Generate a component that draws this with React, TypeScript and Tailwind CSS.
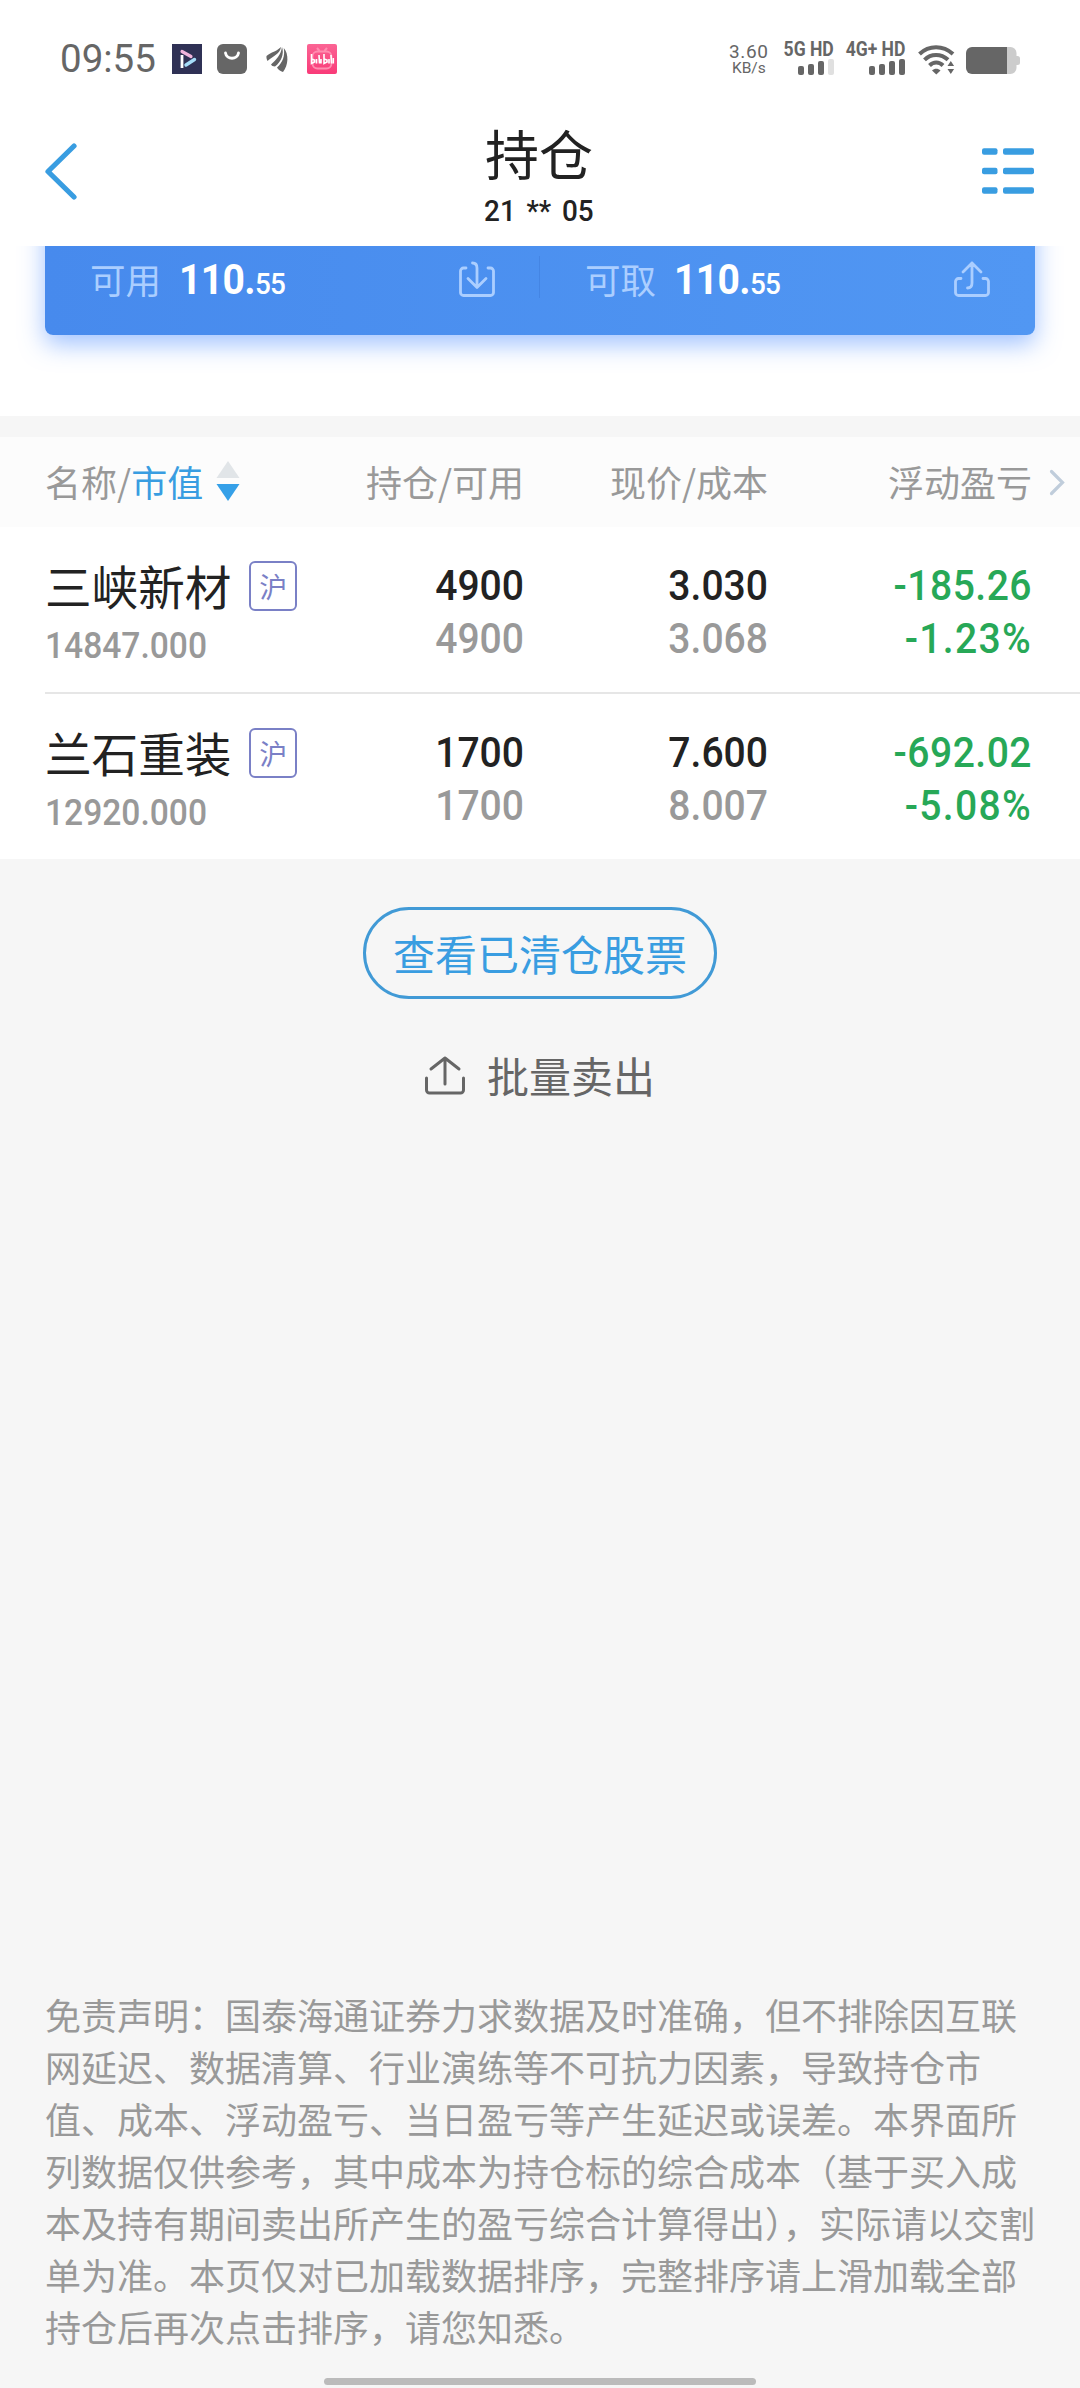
const cjk = "font-['Noto_Sans_CJK_SC',sans-serif]"
const din = "font-['Roboto','Liberation_Sans',sans-serif]"

const holdings = [
  {
    name: "三峡新材",
    market: "沪",
    value: "14847.000",
    amount: "4900",
    available: "4900",
    price: "3.030",
    cost: "3.068",
    profit: "-185.26",
    rate: "-1.23%",
  },
  {
    name: "兰石重装",
    market: "沪",
    value: "12920.000",
    amount: "1700",
    available: "1700",
    price: "7.600",
    cost: "8.007",
    profit: "-692.02",
    rate: "-5.08%",
  },
]

const disclaimer = [
  "免责声明：国泰海通证券力求数据及时准确，但不排除因互联",
  "网延迟、数据清算、行业演练等不可抗力因素，导致持仓市",
  "值、成本、浮动盈亏、当日盈亏等产生延迟或误差。本界面所",
  "列数据仅供参考，其中成本为持仓标的综合成本（基于买入成",
  "本及持有期间卖出所产生的盈亏综合计算得出），实际请以交割",
  "单为准。本页仅对已加载数据排序，完整排序请上滑加载全部",
  "持仓后再次点击排序，请您知悉。",
]

function Signal({ label, bars }: { label: string; bars: number }) {
  return (
    <div className="flex flex-col items-end">
      <span className="text-[19.5px] leading-[18px] font-bold whitespace-pre origin-right scale-x-[0.9]">{label}</span>
      <div className="flex items-end gap-[4px] h-[16px]">
        {[9, 11, 14, 16].map((h, i) => (
          <span
            key={h}
            className={`w-[6px] rounded-[2px] ${i < bars ? "bg-[#666]" : "bg-[#e0e0e0]"}`}
            style={{ height: h }}
          />
        ))}
      </div>
    </div>
  )
}

function StatusBar() {
  return (
    <div className={`h-[120px] flex items-start text-[#666] ${din}`}>
      <span className="ml-[60px] mt-[39px] w-[97px] text-[38.5px] leading-[40px]">09:55</span>

      <svg className="ml-[15px] mt-[44px]" width="30" height="30" viewBox="0 0 30 30">
        <rect width="30" height="30" fill="#2f3155" />
        <path d="M10 11v13" stroke="#fff" strokeWidth="2.8" />
        <path d="M10 7.500l9 5" stroke="#f0b4dc" strokeWidth="3.200" strokeLinecap="round" />
        <path d="M14 21l8.500-5.500" stroke="#a5dcf8" strokeWidth="3.400" strokeLinecap="round" />
      </svg>
      <svg className="ml-[15px] mt-[44px]" width="30" height="30" viewBox="0 0 30 30">
        <rect width="30" height="30" rx="6" fill="#666" />
        <path d="M8.500 9c1 7 12 7 13 0" stroke="#fff" strokeWidth="2.800" fill="none" strokeLinecap="round" />
      </svg>
      <svg className="ml-[19px] mt-[46px]" width="24" height="26" viewBox="0 0 24 26">
        <path d="M0.500 10C5 6 9 6.500 15 1C14 8 7 10 1.500 15C0.500 13 0.300 11 0.500 10z" fill="#666" />
        <path d="M5 18.500C10 14 15 9 16 1C18.500 8 15 16 9 20.500C7 20.500 5.500 19.500 5 18.500z" fill="#666" />
        <path d="M11 21.500C17 16 19 10 17.800 2C23 8 22.500 19 17 26C14.500 25.500 12 23.500 11 21.500z" fill="#666" />
      </svg>
      <svg className="ml-[17px] mt-[44px]" width="30" height="30" viewBox="0 0 30 30">
        <defs>
          <linearGradient id="pink" x1="0" y1="0" x2="0" y2="1">
            <stop offset="0" stopColor="#fb6494" />
            <stop offset="1" stopColor="#f93a78" />
          </linearGradient>
        </defs>
        <rect width="30" height="30" rx="2" fill="url(#pink)" />
        <rect x="5.500" y="7.500" width="19" height="17" rx="5" fill="none" stroke="#ff8db0" strokeWidth="1.800" />
        <path d="M10 4l2.500 3M20 4l-2.500 3" stroke="#ff8db0" strokeWidth="2" />
        <path
          d="M4.500 10v9.500l3-1.500v-2l-3-1M9.500 15v4.500M12 11l.5 8.500M14 15v4.500M17 10v9.500l3-1.500v-2l-3-1M22 15v4.500M24 11l.5 8.500M26.300 14v5.500"
          stroke="#fff"
          strokeWidth="1.600"
          fill="none"
        />
      </svg>

      <div className="ml-auto mt-[42px] mr-[9px] w-[40px] flex flex-col items-center">
        <span className="text-[19px] leading-[19px] tracking-[0.6px]">3.60</span>
        <span className="text-[15.500px] leading-[15px]">KB/s</span>
      </div>
      <div className="mt-[41px] mr-[5px]">
        <Signal label="5G HD" bars={3} />
      </div>
      <div className="mt-[41px] mr-[13px]">
        <Signal label="4G+ HD" bars={4} />
      </div>
      <svg className="mt-[44px] mr-[10px]" width="38" height="31" viewBox="0 0 38 31">
        <g fill="none" stroke="#666" strokeWidth="4">
          <path d="M1.500 10C11 1 25 1 35 10" />
          <path d="M6.500 15.800C13 9.300 23 9.300 30 15.800" />
          <path d="M11.500 21.500C15.500 17.500 21 17.500 25 21.500" />
        </g>
        <path d="M14 26.500C16.500 24 20 24 22.500 26.500L18.300 30.500z" fill="#666" />
        <path d="M29.500 22l3.300-5l3.300 5zM29.500 25h6.600l-3.300 5z" fill="#666" />
      </svg>
      <svg className="mt-[47px] mr-[60px]" width="54" height="27" viewBox="0 0 54 27">
        <path d="M40 0h4.500a6 6 0 0 1 6 6v3h1a2.500 2.500 0 0 1 2.500 2.500v4a2.500 2.500 0 0 1-2.500 2.500h-1v3a6 6 0 0 1-6 6H40z" fill="#ccc" />
        <path d="M6 0h35v27H6a6 6 0 0 1-6-6V6a6 6 0 0 1 6-6z" fill="#666" />
      </svg>
    </div>
  )
}

function NavBar() {
  return (
    <div className="h-[126px] flex items-start justify-between pl-[44px] pr-[46px]">
      <svg className="mt-[23px]" width="52" height="58" viewBox="0 0 52 58" fill="none">
        <path d="M30 3L4 28.500L30 54" stroke="#399de1" strokeWidth="5.200" strokeLinecap="round" strokeLinejoin="round" />
      </svg>
      <div className="flex flex-col items-center text-[#222]">
        <h1 className="text-[54px] leading-[64px] mt-px">持仓</h1>
        <span className={`mt-[8px] text-[30px] leading-[36px] font-medium scale-x-[0.93] [word-spacing:4px] ${din}`}>
          21 ** 05
        </span>
      </div>
      <svg className="mt-[28px]" width="52" height="47" viewBox="0 0 52 47" fill="#399de1">
        {[0, 19.5, 39].map((y) => (
          <g key={y}>
            <rect x="0" y={y + 0.3} width="15.500" height="6.500" rx="2" />
            <rect x="21" y={y + 0.3} width="31" height="6.500" rx="2" />
          </g>
        ))}
      </svg>
    </div>
  )
}

function Balance({ label, dir }: { label: string; dir: "in" | "out" }) {
  return (
    <div className="w-[495px] h-[66px] pl-[45px] pr-[44px] flex items-center">
      <span className="text-[35.5px] text-[#abceff]">{label}</span>
      <span className={`ml-[18px] text-white origin-left scale-x-[0.93] whitespace-nowrap ${din}`}>
        <span className="text-[42px] font-bold tracking-[-0.7px]">110.</span>
        <span className="text-[30px] font-medium tracking-[-0.9px]">55</span>
      </span>
      <svg className="ml-auto" width="38" height="38" viewBox="0 0 38 38" fill="none" stroke="#abceff" strokeWidth="2.800" strokeLinecap="round" strokeLinejoin="round">
        {dir === "in" ? (
          <path d="M8 8H5.500a3 3 0 0 0-3 3v21.500a3 3 0 0 0 3 3h27a3 3 0 0 0 3-3V11a3 3 0 0 0-3-3H30M14.500 3c3.500 0 4.500 2 4.500 5v19.500M10 18.500l9 9l9-9" />
        ) : (
          <path d="M8 18.500H5.500a3 3 0 0 0-3 3v11a3 3 0 0 0 3 3h27a3 3 0 0 0 3-3v-11a3 3 0 0 0-3-3H30M14.500 28c3.500 0 4.500-2 4.500-5V3M10 12l9-9l9 9" />
        )}
      </svg>
    </div>
  )
}

// the card is scrolled half way under the nav bar
function AccountCard() {
  return (
    <div className="h-[170px] overflow-hidden bg-white px-[45px]">
      <div className="-mt-[60px] flex h-[149px] items-end rounded-[8px] bg-linear-to-r from-[#478aed] to-[#5197f3] pb-[23px] shadow-[0_9px_24px_rgba(66,133,255,0.5)]">
        <Balance label="可用" dir="in" />
        <div className="-ml-px mb-[14px] h-[42px] w-px bg-[#4485e4]" />
        <Balance label="可取" dir="out" />
      </div>
    </div>
  )
}

const columns = "grid grid-cols-[235px_244px_244px_264px] pl-[45px]"

function TableHead() {
  return (
    <div className={`relative h-[90px] items-center bg-[#fcfcfc] pb-[2px] text-[36px] leading-[52px] text-[#999] ${columns}`}>
      <div className="flex items-center whitespace-nowrap">
        名称/<span className="text-[#399de1]">市值</span>
        <svg className="ml-[13px]" width="24" height="40" viewBox="0 0 24 40">
          <path d="M12 0L23.500 17H0.500z" fill="#e1e5e8" />
          <path d="M12 40L23.500 23H0.500z" fill="#35a0e8" />
        </svg>
      </div>
      <div className="text-right">持仓/可用</div>
      <div className="text-right">现价/成本</div>
      <div className="text-right">浮动盈亏</div>
      <svg className="absolute right-[15px] top-[32px]" width="16" height="27" viewBox="0 0 16 27" fill="none">
        <path d="M2.500 2.500L13.500 13.500L2.500 24.500" stroke="#c0cddb" strokeWidth="3.200" strokeLinecap="round" />
      </svg>
    </div>
  )
}

function Pair({ top, bottom, topClass, bottomClass }: { top: string; bottom: string; topClass: string; bottomClass: string }) {
  return (
    <div className={`mt-[32px] text-right text-[42px] leading-[53px] font-medium origin-right scale-x-[0.93] ${din}`}>
      <div className={topClass}>{top}</div>
      <div className={bottomClass}>{bottom}</div>
    </div>
  )
}

function HoldingRow({ item }: { item: (typeof holdings)[0] }) {
  return (
    <div className={`h-[165px] ${columns}`}>
      <div className="mt-[33px] whitespace-nowrap">
        <div className="flex h-[51px] items-center">
          <span className="-mt-[2px] text-[46.6px] leading-[50px] text-[#222]">{item.name}</span>
          <span className="ml-[18px] flex h-[50px] w-[48px] shrink-0 items-center justify-center rounded-[6px] border-2 border-[#7a80c6] text-[28px] text-[#7a80c6]">
            {item.market}
          </span>
        </div>
        <div className={`mt-[15px] text-[36.5px] leading-[40px] font-medium text-[#999] origin-left scale-x-[0.92] ${din}`}>
          {item.value}
        </div>
      </div>
      <Pair top={item.amount} bottom={item.available} topClass="text-[#222]" bottomClass="text-[#999]" />
      <Pair top={item.price} bottom={item.cost} topClass="text-[#222]" bottomClass="text-[#999]" />
      <Pair
        top={item.profit}
        bottom={item.rate}
        topClass="text-[#27a857] tracking-[0.5px]"
        bottomClass="text-[#27a857] tracking-[1.4px]"
      />
    </div>
  )
}

export default function App() {
  return (
    <div className={`w-[1080px] h-[2388px] overflow-hidden flex flex-col bg-[#f6f6f6] ${cjk}`}>
      <header className="bg-white">
        <StatusBar />
        <NavBar />
      </header>
      <AccountCard />

      <section className="mt-[21px] bg-white">
        <TableHead />
        {holdings.map((item, i) => (
          <div key={item.name}>
            {i > 0 && <div className="ml-[45px] h-[2px] bg-[#e6e6e6]" />}
            <HoldingRow item={item} />
          </div>
        ))}
      </section>

      <div className="flex flex-col items-center">
        <button className="mt-[48px] flex h-[92px] w-[354px] items-center justify-center rounded-full border-3 border-[#419ad6] pb-[2px] text-[42px] text-[#399de1]">
          查看已清仓股票
        </button>
        <button className="mt-[46px] flex h-[60px] items-center text-[42px] text-[#666]">
          <svg className="mr-[22px]" width="40" height="39" viewBox="0 0 40 39" fill="none" stroke="#666" strokeWidth="3" strokeLinecap="round" strokeLinejoin="round">
            <path d="M1.500 22v12a3 3 0 0 0 3 3h31a3 3 0 0 0 3-3V22M20 28V2M6 13L20 2l14 11" />
          </svg>
          <span className="-mt-px">批量卖出</span>
        </button>
      </div>

      <footer className="mt-auto flex flex-col">
        <div className="pl-[45px] text-[36px] leading-[52px] whitespace-nowrap text-[#999]">
          {disclaimer.map((line) => (
            <p key={line}>{line}</p>
          ))}
        </div>
        <div className="mt-[26px] mb-[3px] h-[7px] w-[432px] self-center rounded-full bg-[#bbb]" />
      </footer>
    </div>
  )
}
